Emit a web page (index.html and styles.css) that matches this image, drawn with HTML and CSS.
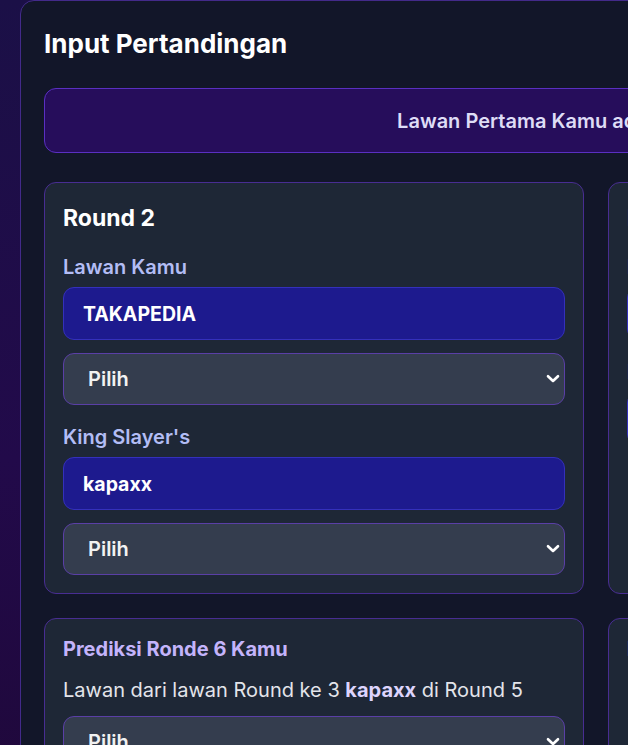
FILE: index.html
```html
<!DOCTYPE html>
<html lang="id">
<head>
<meta charset="utf-8">
<title>Input Pertandingan</title>
<link rel="stylesheet" href="styles.css">
</head>
<body>
<div class="page">
  <section class="panel">
    <h1 class="panel-title">Input Pertandingan</h1>
    <div class="banner">Lawan Pertama Kamu adalah TAKAPEDIA</div>
    <div class="grid">
      <div class="card">
        <h2 class="card-title">Round 2</h2>
        <div class="fields">
          <div class="field">
            <label class="label">Lawan Kamu</label>
            <div class="input">TAKAPEDIA</div>
            <div class="select-wrap">
              <select class="select"><option>Pilih</option></select>
              <svg class="chev" viewBox="0 0 14 10" width="14" height="10"><path d="M2 2.2 L7 7 L12 2.2" fill="none" stroke="#ffffff" stroke-width="2.6" stroke-linecap="round" stroke-linejoin="round"/></svg>
            </div>
          </div>
          <div class="field">
            <label class="label">King Slayer's</label>
            <div class="input">kapaxx</div>
            <div class="select-wrap">
              <select class="select"><option>Pilih</option></select>
              <svg class="chev" viewBox="0 0 14 10" width="14" height="10"><path d="M2 2.2 L7 7 L12 2.2" fill="none" stroke="#ffffff" stroke-width="2.6" stroke-linecap="round" stroke-linejoin="round"/></svg>
            </div>
          </div>
        </div>
      </div>
      <div class="card">
        <h2 class="card-title">Round 3</h2>
        <div class="fields">
          <div class="field">
            <label class="label">Lawan Kamu</label>
            <div class="input">kapaxx</div>
          </div>
          <div class="field">
            <label class="label">King Slayer's</label>
            <div class="input">TAKAPEDIA</div>
          </div>
        </div>
      </div>
      <div class="card">
        <h3 class="predict-title">Prediksi Ronde 6 Kamu</h3>
        <p class="predict-text">Lawan dari lawan Round ke 3 <strong>kapaxx</strong> di Round 5</p>
        <div class="select-wrap">
          <select class="select"><option>Pilih</option></select>
          <svg class="chev" viewBox="0 0 14 10" width="14" height="10"><path d="M2 2.2 L7 7 L12 2.2" fill="none" stroke="#ffffff" stroke-width="2.6" stroke-linecap="round" stroke-linejoin="round"/></svg>
        </div>
      </div>
      <div class="card">
        <h3 class="predict-title">Prediksi Ronde 7 Kamu</h3>
        <p class="predict-text">Lawan dari lawan Round ke 2 <strong>TAKAPEDIA</strong> di Round 5</p>
        <div class="select-wrap">
          <select class="select"><option>Pilih</option></select>
          <svg class="chev" viewBox="0 0 14 10" width="14" height="10"><path d="M2 2.2 L7 7 L12 2.2" fill="none" stroke="#ffffff" stroke-width="2.6" stroke-linecap="round" stroke-linejoin="round"/></svg>
        </div>
      </div>
    </div>
  </section>
</div>
</body>
</html>
```

FILE: styles.css
```css
* { box-sizing: border-box; }
html, body {
  margin: 0;
  padding: 0;
  overflow: hidden;
}
body {
  min-height: 745px;
  background: linear-gradient(180deg, #1b1047 0%, #220a4a 55%, #1f0839 100%);
  font-family: Inter, "Noto Sans", sans-serif;
  color: #ffffff;
}
.page {
  padding-left: 20px;
}
.panel {
  width: 1154px;
  background: #121629;
  border: 1px solid #432a8a;
  border-radius: 14px;
  padding: 25px 24px 24px 23px;
}
.panel-title {
  margin: 0 0 27px;
  font-size: 26px;
  line-height: 35px;
  font-weight: 700;
  color: #ffffff;
}
.banner {
  height: 65px;
  display: flex;
  align-items: center;
  justify-content: center;
  background: #260d5b;
  border: 1px solid #5a2fc2;
  border-radius: 12px;
  font-size: 20px;
  font-weight: 600;
  color: #dedcf6;
  margin-bottom: 29px;
}
.grid {
  display: grid;
  grid-template-columns: 540px 540px;
  column-gap: 24px;
  row-gap: 24px;
}
.card {
  background: #1e2736;
  border: 1px solid #482d92;
  border-radius: 12px;
  padding: 18px;
}
.card-title {
  margin: 0 0 16px;
  font-size: 23px;
  line-height: 35px;
  font-weight: 700;
  color: #ffffff;
}
.fields {
  display: flex;
  flex-direction: column;
  gap: 17px;
}
.field {
  display: flex;
  flex-direction: column;
}
.label {
  font-size: 20px;
  line-height: 30px;
  font-weight: 600;
  color: #b3bdf5;
  margin-bottom: 5px;
}
.input {
  height: 53px;
  display: flex;
  align-items: center;
  padding-left: 19px;
  background: #1d1a8e;
  border: 1px solid #3430bb;
  border-radius: 11px;
  font-size: 19.5px;
  font-weight: 700;
  color: #ffffff;
}
.select-wrap {
  position: relative;
  margin-top: 13px;
}
.select {
  display: block;
  width: 100%;
  height: 52px;
  -webkit-appearance: none;
  appearance: none;
  background: #343d4e;
  border: 1px solid #5a3fa6;
  border-radius: 11px;
  padding: 0 40px 0 24px;
  font-family: Inter, "Noto Sans", sans-serif;
  font-size: 20px;
  font-weight: 600;
  color: #f2f2f2;
  outline: none;
}
.chev {
  position: absolute;
  right: 5px;
  top: 21px;
  pointer-events: none;
}
.predict-title {
  margin: 0 0 16px;
  font-size: 20px;
  line-height: 25px;
  font-weight: 700;
  color: #c4b4fb;
}
.predict-text {
  margin: 0;
  font-size: 20px;
  line-height: 25px;
  font-weight: 400;
  color: #e3e4ea;
}
.predict-text strong {
  font-weight: 700;
  color: #ddd4fd;
}
```
